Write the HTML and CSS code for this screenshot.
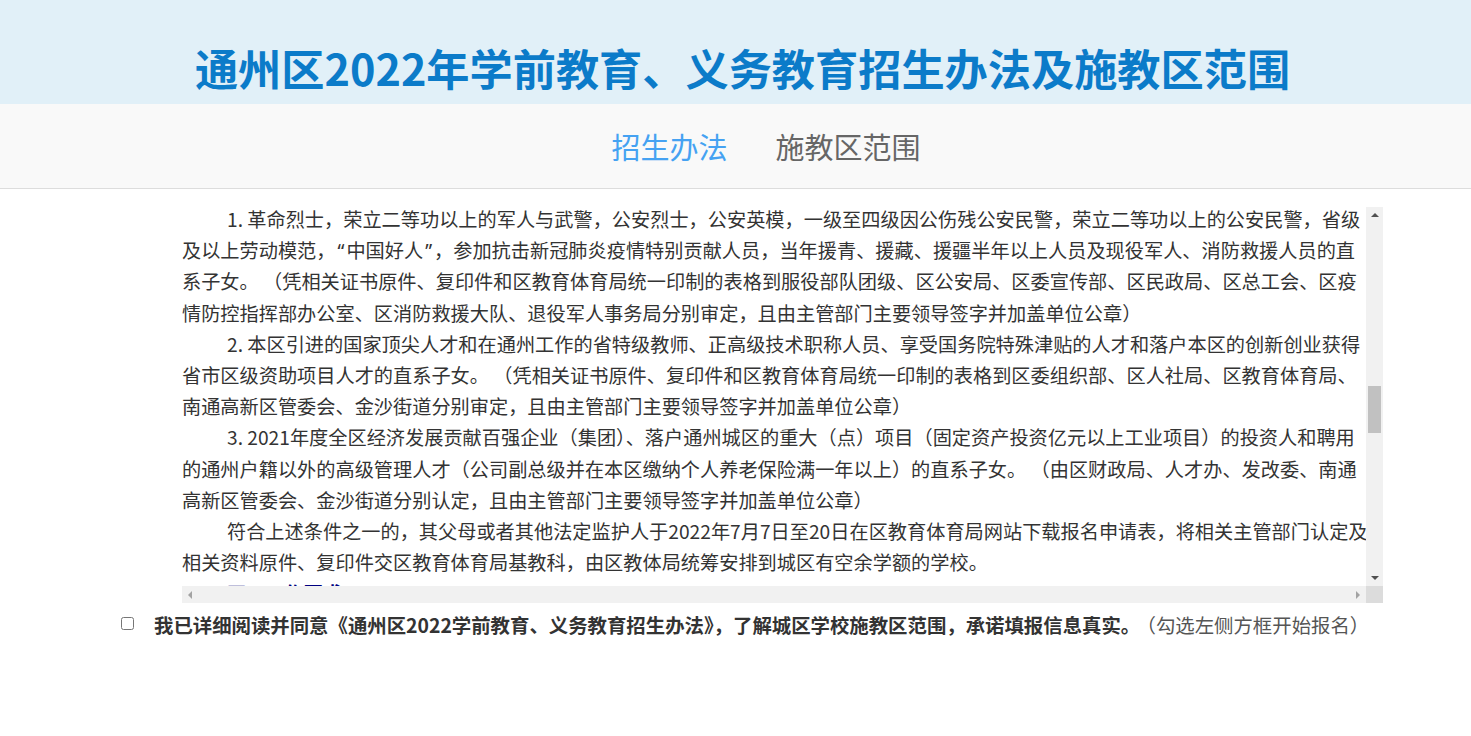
FILE: index.html
```html
<!DOCTYPE html>
<html lang="zh-CN">
<head>
<meta charset="utf-8">
<title>通州区2022年学前教育、义务教育招生办法及施教区范围</title>
<link rel="stylesheet" href="styles.css">
</head>
<body>
<header class="banner">
  <h1 class="title">通州区2022年学前教育、义务教育招生办法及施教区范围</h1>
</header>
<nav class="tabs">
  <a class="tab active">招生办法</a>
  <a class="tab">施教区范围</a>
</nav>
<main class="page">
  <section class="scrollbox">
    <div class="viewport">
      <div class="content">
        <p class="para">1. 革命烈士，荣立二等功以上的军人与武警，公安烈士，公安英模，一级至四级因公伤残公安民警，荣立二等功以上的公安民警，省级及以上劳动模范，<span class="q">“</span>中国好人<span class="q">”</span>，参加抗击新冠肺炎疫情特别贡献人员，当年援青、援藏、援疆半年以上人员及现役军人、消防救援人员的直系子女。 （凭相关证书原件、复印件和区教育体育局统一印制的表格到服役部队团级、区公安局、区委宣传部、区民政局、区总工会、区疫情防控指挥部办公室、区消防救援大队、退役军人事务局分别审定，且由主管部门主要领导签字并加盖单位公章）</p>
        <p class="para">2. 本区引进的国家顶尖人才和在通州工作的省特级教师、正高级技术职称人员、享受国务院特殊津贴的人才和落户本区的创新创业获得省市区级资助项目人才的直系子女。 （凭相关证书原件、复印件和区教育体育局统一印制的表格到区委组织部、区人社局、区教育体育局、南通高新区管委会、金沙街道分别审定，且由主管部门主要领导签字并加盖单位公章）</p>
        <p class="para">3. 2021年度全区经济发展贡献百强企业（集团）、落户通州城区的重大（点）项目（固定资产投资亿元以上工业项目）的投资人和聘用的通州户籍以外的高级管理人才（公司副总级并在本区缴纳个人养老保险满一年以上）的直系子女。 （由区财政局、人才办、发改委、南通高新区管委会、金沙街道分别认定，且由主管部门主要领导签字并加盖单位公章）</p>
        <p class="para">符合上述条件之一的，其父母或者其他法定监护人于2022年7月7日至20日在区教育体育局网站下载报名申请表，将相关主管部门认定及相关资料原件、复印件交区教育体育局基教科，由区教体局统筹安排到城区有空余学额的学校。</p>
        <p class="para heading">四、工作要求</p>
      </div>
    </div>
    <div class="vbar">
      <span class="arrow up"></span>
      <div class="vtrack"><div class="vthumb"></div></div>
      <span class="arrow down"></span>
    </div>
    <div class="hbar">
      <span class="arrow left"></span>
      <span class="arrow right"></span>
    </div>
    <div class="corner"></div>
  </section>
  <label class="agree">
    <input type="checkbox" class="check">
    <span class="agree-text"><b>我已详细阅读并同意《通州区2022学前教育、义务教育招生办法》，了解城区学校施教区范围，承诺填报信息真实。</b><span class="hint">（勾选左侧方框开始报名）</span></span>
  </label>
</main>
</body>
</html>
```

FILE: styles.css
```css
* { box-sizing: border-box; }
html, body { margin: 0; padding: 0; background: #fff; }
body {
  font-family: "Noto Sans CJK SC", "Noto Sans", sans-serif;
  color: #333;
}
.banner {
  height: 104px;
  background: #e1f0f8;
  padding-top: 37px;
  padding-left: 14px;
  text-align: center;
}
.title {
  margin: 0;
  font-size: 43.2px;
  line-height: 60px;
  font-weight: 700;
  color: #0b7bc9;
}
.tabs {
  height: 85px;
  background: #f9f9f9;
  border-bottom: 1px solid #dddddd;
  display: flex;
  justify-content: center;
  align-items: center;
  gap: 48px;
  padding-left: 61px;
}
.tab {
  font-size: 29px;
  color: #666;
  line-height: 40px;
  cursor: pointer;
}
.tab.active { color: #45a2f2; }
.page { padding-top: 18px; }
.scrollbox {
  margin-left: 182px;
  width: 1201px;
  height: 396px;
  display: grid;
  grid-template-columns: 1fr 17px;
  grid-template-rows: 1fr 17px;
}
.viewport {
  overflow: hidden;
  background: #fff;
}
.content {
  width: 1190px;
  margin-top: -3px;
  font-size: 19.2px;
  line-height: 31.2px;
  color: #333;
}
.para {
  margin: 0;
  text-indent: 45px;
}
.q {
  font-family: "Noto Sans", "Liberation Sans", sans-serif;
  padding: 0 2px;
}
.heading {
  font-weight: 700;
  color: #000080;
}
.vbar {
  background: #f1f1f1;
  display: flex;
  flex-direction: column;
  align-items: center;
}
.vtrack {
  flex: 1;
  width: 100%;
  padding-top: 169px;
  display: flex;
  justify-content: center;
}
.vthumb {
  width: 13px;
  height: 47px;
  background: #c1c1c1;
}
.hbar {
  background: #f1f1f1;
  display: flex;
  justify-content: space-between;
  align-items: center;
  padding: 0 6px;
}
.corner { background: #dcdcdc; }
.arrow {
  width: 0;
  height: 0;
  display: block;
  border-style: solid;
}
.arrow.up {
  margin-top: 6px;
  border-width: 0 4px 4px 4px;
  border-color: transparent transparent #505050 transparent;
}
.arrow.down {
  margin-bottom: 6px;
  border-width: 4px 4px 0 4px;
  border-color: #505050 transparent transparent transparent;
}
.arrow.left {
  border-width: 4px 4px 4px 0;
  border-color: transparent #a3a3a3 transparent transparent;
}
.arrow.right {
  border-width: 4px 0 4px 4px;
  border-color: transparent transparent transparent #a3a3a3;
}
.agree {
  display: flex;
  align-items: center;
  margin-top: 6px;
  padding-left: 117px;
  font-size: 19.4px;
  line-height: 31px;
}
.check {
  width: 13px;
  height: 13px;
  margin: 0 20px 2px 4px;
}
.agree-text b { color: #333; font-weight: 700; }
.hint { color: #555; margin-left: 6px; }
```
